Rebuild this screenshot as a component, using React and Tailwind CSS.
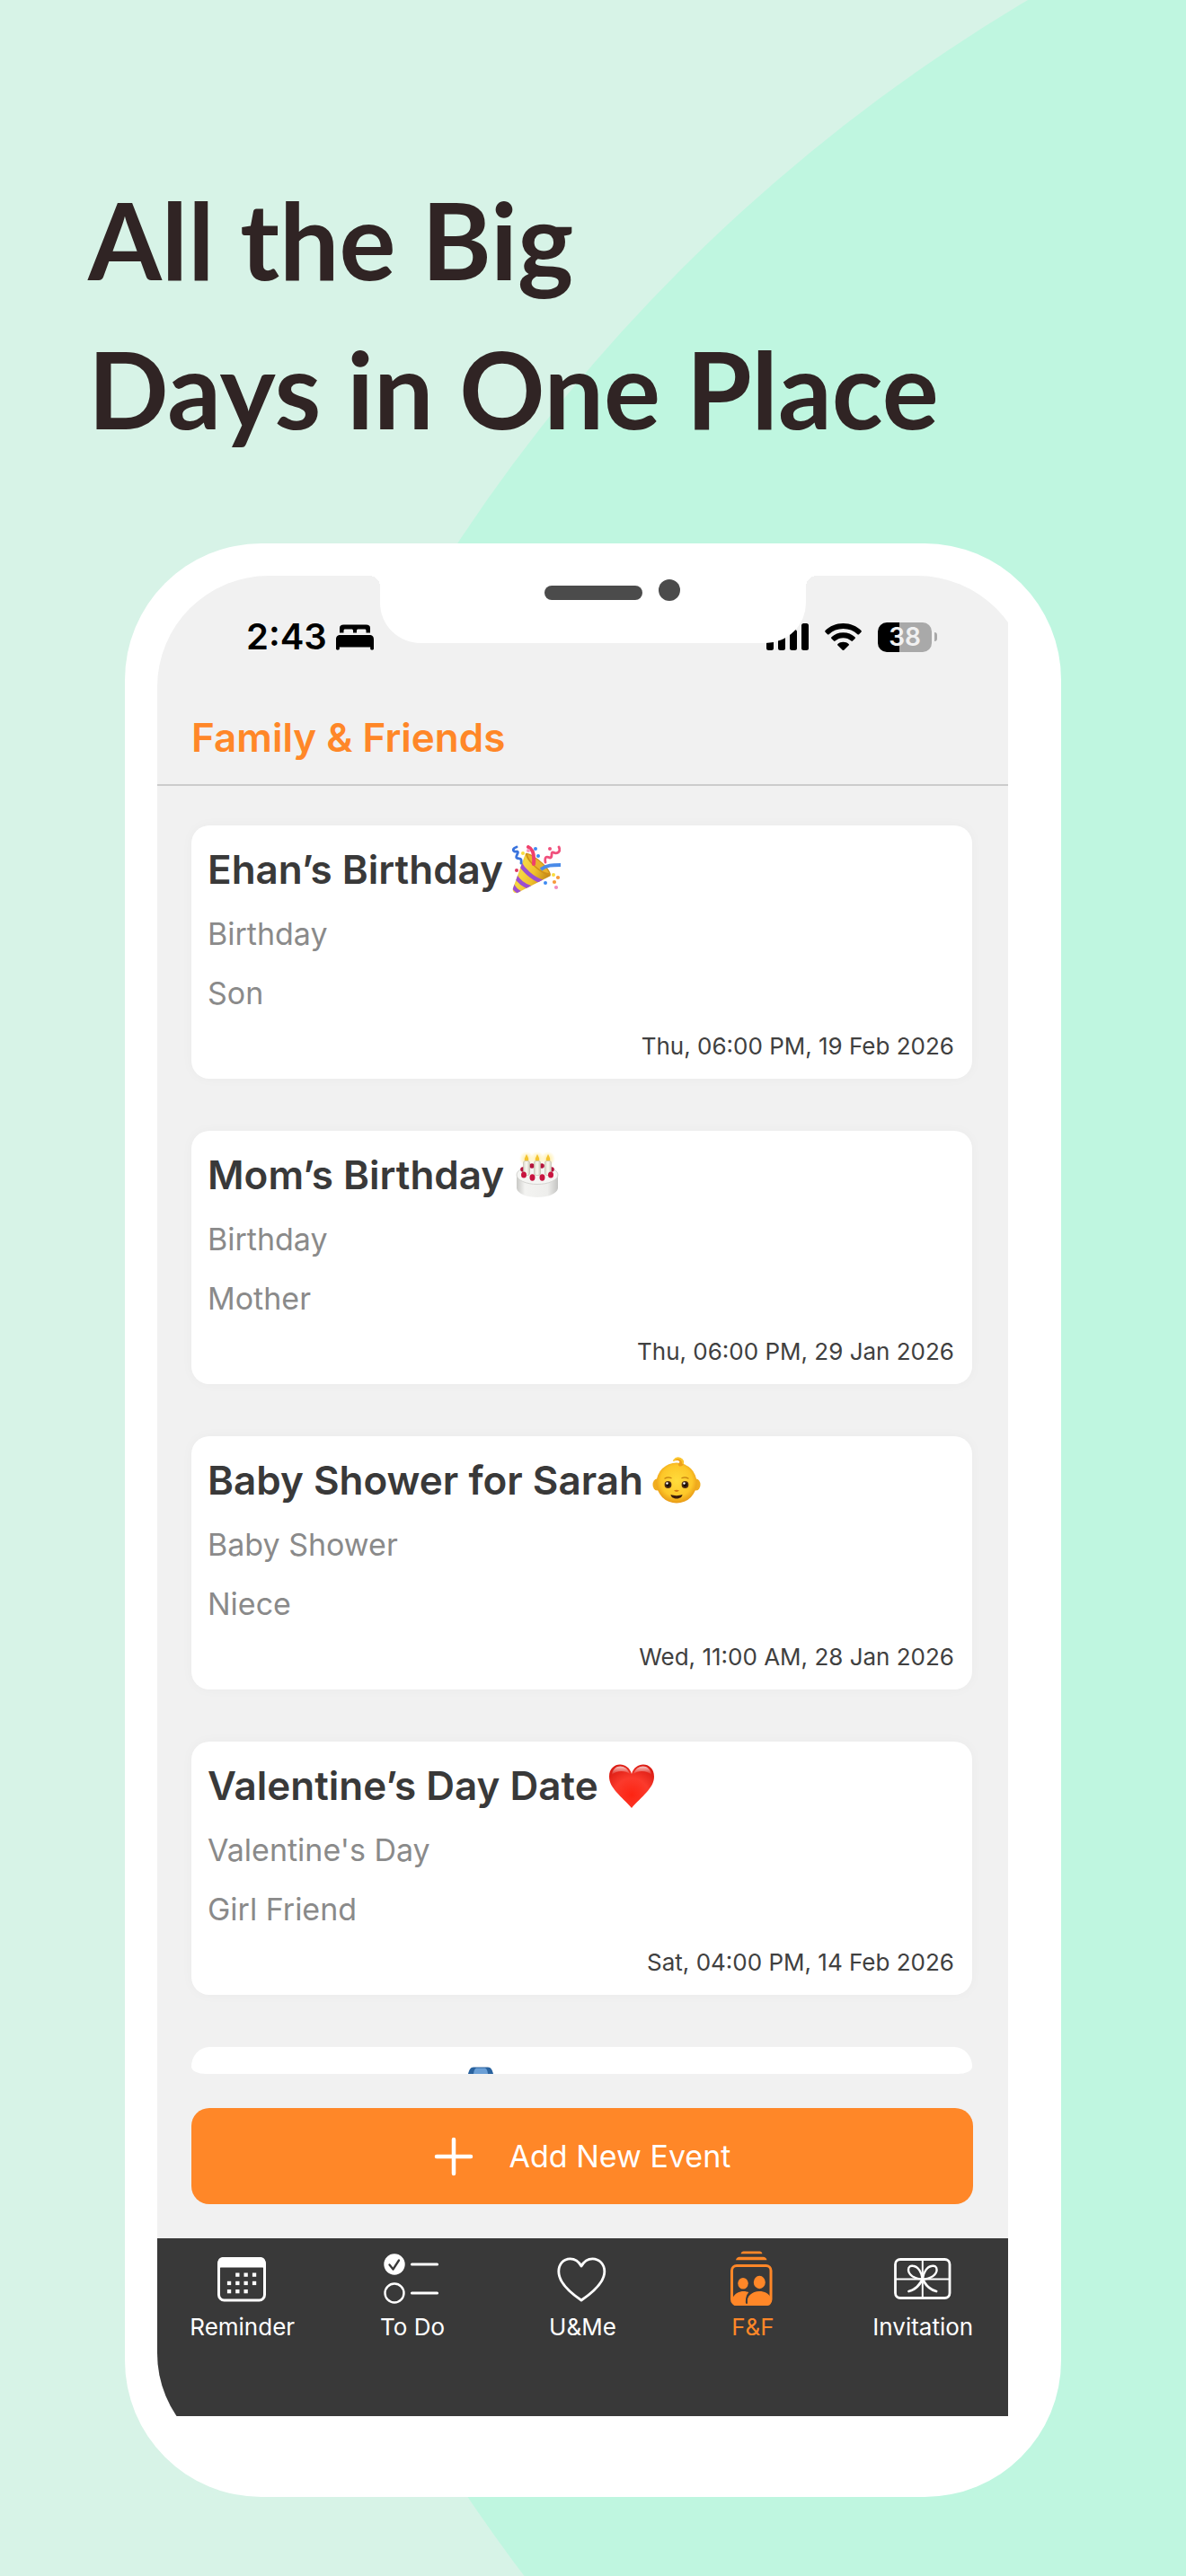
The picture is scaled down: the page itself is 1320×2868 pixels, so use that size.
import React from "react";

function PartyEmoji() {
  return (
    <svg viewBox="0 0 54 54" className="size-[54px]" role="img" aria-label="Party popper">
      <defs>
        <linearGradient id="cone" x1="0" y1="0" x2="1" y2="0.4">
          <stop offset="0" stopColor="#b9861a" />
          <stop offset="0.35" stopColor="#f6d743" />
          <stop offset="0.65" stopColor="#f0c12c" />
          <stop offset="1" stopColor="#c58a17" />
        </linearGradient>
        <clipPath id="coneClip">
          <path d="M15 9 C20 12 38 26 43 34 L6 53 C2 54 0 51 1 48 Z" />
        </clipPath>
      </defs>
      <path d="M15 9 C20 12 38 26 43 34 L6 53 C2 54 0 51 1 48 Z" fill="url(#cone)" />
      <g clipPath="url(#coneClip)" fill="none" stroke="#9a4fd0" strokeWidth="4.5">
        <path d="M8 19 C12 27 22 37 34 41" />
        <path d="M3 33 C6 39 13 45 22 48" />
        <path d="M0 44 C2 48 5 51 9 53" />
      </g>
      <path d="M15 9 C20 7 42 24 43 33 C40 37 15 20 15 9 Z" fill="#cf8f18" />
      <path d="M17 10 C24 12 38 23 41 31 C34 31 19 20 17 10 Z" fill="#e9b32c" />
      <path d="M18 2 C23 4 25 10 24 21" fill="none" stroke="#f0406c" strokeWidth="4" strokeLinecap="round" />
      <path d="M32 27 C38 22 45 22 54 22" fill="none" stroke="#4a8be8" strokeWidth="4" />
      <path d="M5 2 C-1 4 1 8 5 7 C9 7 3 13 5 14 C8 16 11 13 10 20" fill="none" stroke="#3973dd" strokeWidth="2.8" strokeLinecap="round" />
      <path d="M52 2 C55 8 49 10 46 8 C42 7 46 14 42 14 C38 12 36 13 37 19" fill="none" stroke="#f0507c" strokeWidth="2.8" strokeLinecap="round" />
      <circle cx="26" cy="4" r="2" fill="#3d8af2" />
      <circle cx="29" cy="12" r="2" fill="#3d8af2" />
      <circle cx="18" cy="6" r="2" fill="#f59ac0" />
      <circle cx="42" cy="4" r="2" fill="#f0507c" />
      <circle cx="12" cy="9" r="2" fill="#f9dc3f" />
      <circle cx="5" cy="28" r="2" fill="#e03a62" />
      <circle cx="46" cy="33" r="2" fill="#f9dc3f" />
      <circle cx="51" cy="36" r="2.1" fill="#f79a3a" />
      <circle cx="47" cy="41" r="2.1" fill="#f79a3a" />
      <circle cx="37" cy="42" r="2" fill="#3d8af2" />
      <circle cx="49" cy="47" r="2.1" fill="#f08ac0" />
    </svg>
  );
}

function CakeEmoji() {
  return (
    <svg viewBox="0 0 54 54" className="size-[54px]" role="img" aria-label="Birthday cake">
      <defs>
        <linearGradient id="cakeSide" x1="0" y1="0" x2="1" y2="0">
          <stop offset="0" stopColor="#c9c9c6" />
          <stop offset="0.2" stopColor="#f3f3f1" />
          <stop offset="0.75" stopColor="#eeeeec" />
          <stop offset="1" stopColor="#c4c4c2" />
        </linearGradient>
        <linearGradient id="candle" x1="0" y1="0" x2="1" y2="0">
          <stop offset="0" stopColor="#d9d6c8" />
          <stop offset="0.5" stopColor="#fbfaf3" />
          <stop offset="1" stopColor="#cfccbd" />
        </linearGradient>
        <radialGradient id="glow">
          <stop offset="0" stopColor="#ffe680" stopOpacity="0.8" />
          <stop offset="1" stopColor="#ffe680" stopOpacity="0" />
        </radialGradient>
      </defs>
      <path d="M4 27 V42 C5 48 15 52 27 52 S49 48 50 42 V27 Z" fill="url(#cakeSide)" />
      <ellipse cx="27" cy="27" rx="23" ry="10.5" fill="#f5f5f3" stroke="#d4d4d1" />
      <g fill="#b5123c">
        <circle cx="21" cy="17" r="2.8" />
        <circle cx="32" cy="17" r="2.8" />
        <circle cx="11" cy="21" r="2.8" />
        <circle cx="43" cy="21" r="2.8" />
      </g>
      {[15, 27, 39].map((x) => (
        <g key={x}>
          <circle cx={x} cy="9" r="8" fill="url(#glow)" />
          <path d={`M${x} 4 c1.5 3 2.5 4.500 2.200 6.500 c-.5 2.300 -4 2.300 -4.400 0 c-.3 -2 1 -3.500 2.200 -6.500z`} fill="#f3c330" />
          <rect x={x - 3.5} y="11.500" width="7" height="16" rx="2" fill="url(#candle)" stroke="#bdb9a8" strokeWidth="0.6" />
        </g>
      ))}
      <g fill="#c8143f">
        <ellipse cx="12" cy="27" rx="3" ry="3.5" />
        <ellipse cx="21.500" cy="30" rx="3" ry="3.700" />
        <ellipse cx="32.500" cy="30" rx="3" ry="3.700" />
        <ellipse cx="42" cy="27" rx="3" ry="3.500" />
      </g>
    </svg>
  );
}

function BabyEmoji() {
  return (
    <svg viewBox="0 0 54 54" className="size-[54px]" role="img" aria-label="Baby">
      <defs>
        <radialGradient id="skin" cx="0.5" cy="0.45" r="0.55">
          <stop offset="0" stopColor="#ffdc3c" />
          <stop offset="0.7" stopColor="#fdc729" />
          <stop offset="1" stopColor="#e99a16" />
        </radialGradient>
      </defs>
      <ellipse cx="5" cy="32" rx="4.500" ry="6.500" fill="#f0ac1e" />
      <ellipse cx="49" cy="32" rx="4.500" ry="6.500" fill="#f0ac1e" />
      <circle cx="27" cy="30" r="22.500" fill="url(#skin)" />
      <path d="M24 5 C28 -1 36 3 35 8 C34 13 28 12 29 9 C30 7 31 7 30 6 C28 4 27 6 24 5 Z" fill="#eda01b" />
      <path d="M24 5 C28 0 34 3 34 8" fill="none" stroke="#fbc52d" strokeWidth="2" strokeLinecap="round" />
      <path d="M14 25 q3.500 -2 7 -.5 M33 24.500 q3.500 -1.500 7 .5" fill="none" stroke="#c27c10" strokeWidth="1.300" strokeLinecap="round" />
      <circle cx="17.500" cy="32" r="3.900" fill="#4b2b12" />
      <circle cx="36.500" cy="32" r="3.900" fill="#4b2b12" />
      <circle cx="17.500" cy="32" r="2.200" fill="#160c05" />
      <circle cx="36.500" cy="32" r="2.200" fill="#160c05" />
      <circle cx="16.500" cy="30.500" r="1.200" fill="#fff" />
      <circle cx="35.500" cy="30.500" r="1.200" fill="#fff" />
      <path d="M24 38.500 q3 2.800 6 0 q-3 -1.500 -6 0z" fill="#d27a11" />
      <path d="M20.500 43 C24 44.500 30 44.500 33.500 43 C33 49 21 49 20.500 43 Z" fill="#3a1c0b" />
    </svg>
  );
}

function HeartEmoji() {
  return (
    <svg viewBox="0 0 54 54" className="size-[54px]" role="img" aria-label="Red heart">
      <defs>
        <radialGradient id="heartFill" cx="0.5" cy="0.7" r="0.7">
          <stop offset="0" stopColor="#fd2412" />
          <stop offset="0.55" stopColor="#fb3a2c" />
          <stop offset="1" stopColor="#dc1d14" />
        </radialGradient>
        <linearGradient id="heartShine" x1="0" y1="0" x2="0" y2="1">
          <stop offset="0" stopColor="#fff" stopOpacity="0.75" />
          <stop offset="1" stopColor="#fff" stopOpacity="0" />
        </linearGradient>
      </defs>
      <path d="M27 14 C23 -1 2 0 2 17 C2 30 16 39 27 52 C38 39 52 30 52 17 C52 0 31 -1 27 14 Z" fill="url(#heartFill)" />
      <path d="M5 15 C6 3 21 2 25 14 C20 10 10 10 5 15 Z" fill="url(#heartShine)" />
      <path d="M49 15 C48 3 33 2 29 14 C34 10 44 10 49 15 Z" fill="url(#heartShine)" />
    </svg>
  );
}

function BedIcon() {
  return (
    <svg viewBox="0 0 42 29" className="h-[29px] w-[42px]" role="img" aria-label="Sleep focus">
      <path d="M4 9.500 V4.500 C4 1.500 5.500 0.500 8.500 0.500 H33.500 C36.500 0.500 38 1.500 38 4.500 V9.500 H33.500 V7.500 C33.500 6 33 5.500 31.500 5.500 H25 C23.500 5.500 23 6 23 7.500 V9.500 H19 V7.500 C19 6 18.500 5.500 17 5.500 H10.500 C9 5.500 8.500 6 8.500 7.500 V9.500 Z" />
      <path d="M0 17 C0 13.500 1.500 12 5 12 H37 C40.500 12 42 13.500 42 17 V27.500 C42 29 38.200 29 38.200 27.500 V25.500 H3.800 V27.500 C3.800 29 0 29 0 27.500 Z" />
    </svg>
  );
}

function SignalIcon() {
  return (
    <svg viewBox="0 0 47 30" className="h-[30px] w-[47px]" role="img" aria-label="Signal strength">
      <rect x="0" y="19" width="8" height="11" rx="2.500" />
      <rect x="13" y="13" width="8" height="17" rx="2.500" />
      <rect x="26" y="7" width="8" height="23" rx="2.500" />
      <rect x="39" y="0" width="8" height="30" rx="2.500" />
    </svg>
  );
}

function WifiIcon() {
  return (
    <svg viewBox="0 0 41 30" className="h-[30px] w-[41px]" role="img" aria-label="Wi-Fi">
      <path d="M20.500 0 C28.500 0 35.500 3 40.500 8 C41 8.600 41 9.200 40.500 9.700 L38 12.200 C37.500 12.700 36.900 12.600 36.400 12.200 C32.200 8.200 26.700 6 20.500 6 S8.800 8.200 4.600 12.200 C4.100 12.600 3.500 12.700 3 12.200 L0.500 9.700 C0 9.200 0 8.600 0.500 8 C5.500 3 12.500 0 20.500 0 Z" />
      <path d="M20.500 10.300 C25.600 10.300 30.200 12.200 33.600 15.300 C34.100 15.900 34.100 16.500 33.600 17 L31 19.500 C30.500 20 29.900 20 29.400 19.600 C27 17.500 23.900 16.300 20.500 16.300 S14 17.500 11.600 19.600 C11.100 20 10.500 20 10 19.500 L7.400 17 C6.900 16.500 6.900 15.900 7.400 15.300 C10.800 12.200 15.400 10.300 20.500 10.300 Z" />
      <path d="M20.500 20.800 C22.900 20.800 25 21.600 26.600 23 C27.100 23.500 27.100 24.100 26.600 24.600 L21.300 29.700 C20.800 30.100 20.200 30.100 19.700 29.700 L14.400 24.600 C13.900 24.100 13.900 23.500 14.400 23 C16 21.600 18.100 20.800 20.500 20.800 Z" />
    </svg>
  );
}

function Battery() {
  return (
    <div className="flex items-center gap-[3px]">
      <div className="flex h-[33px] w-[60px] items-center justify-center rounded-[10px] bg-[linear-gradient(to_right,#000_40%,#a9a9a9_40%)] text-[28px] leading-[33px] font-semibold text-[#f1f1f1]">
        38
      </div>
      <div className="h-[10px] w-[3px] rounded-r-full bg-[#a9a9a9]" />
    </div>
  );
}

function ReminderIcon() {
  return (
    <svg viewBox="0 0 64 64" className="size-16" fill="none" aria-hidden="true">
      <rect x="5.500" y="9.500" width="51" height="46.500" rx="6" stroke="currentColor" strokeWidth="3" />
      <path d="M4.500 22 V14 C4.500 10 7 8 11 8 H51 C55 8 57.500 10 57.500 14 V22 C56.500 20 55 19.500 52.500 19.500 H9.500 C7 19.500 5.500 20 4.500 22 Z" fill="currentColor" />
      <g fill="currentColor">
        <rect x="24.200" y="25.500" width="4.300" height="4.300" />
        <rect x="33.500" y="25.500" width="4.300" height="4.300" />
        <rect x="42.900" y="25.500" width="4.300" height="4.300" />
        <rect x="14.900" y="34.800" width="4.300" height="4.300" />
        <rect x="24.200" y="34.800" width="4.300" height="4.300" />
        <rect x="33.500" y="34.800" width="4.300" height="4.300" />
        <rect x="42.900" y="34.800" width="4.300" height="4.300" />
        <rect x="14.900" y="44" width="4.300" height="4.300" />
        <rect x="24.200" y="44" width="4.300" height="4.300" />
        <rect x="33.500" y="44" width="4.300" height="4.300" />
      </g>
    </svg>
  );
}

function TodoIcon() {
  return (
    <svg viewBox="0 0 64 64" className="size-16" fill="none" strokeLinecap="round" strokeLinejoin="round" aria-hidden="true">
      <circle cx="12" cy="16" r="11.700" fill="currentColor" />
      <path d="M6.500 16.500 L10.500 21.500 L17 11.500" stroke="#393939" strokeWidth="2.300" />
      <circle cx="12" cy="48" r="10.500" stroke="currentColor" strokeWidth="2.400" />
      <path d="M31.500 16 H59.500 M31.500 48 H59.500" stroke="currentColor" strokeWidth="3.200" />
    </svg>
  );
}

function HeartIcon() {
  return (
    <svg viewBox="0 0 64 64" className="size-16" fill="none" aria-hidden="true">
      <path d="M31 18 C28 12.500 24 9.800 18.500 9.800 C11 9.800 5.800 16 5.800 24 C5.800 36 17 46.500 31 56 C45 46.500 56.800 36 56.800 24 C56.800 16 51 9.800 43.500 9.800 C38 9.800 34 12.500 31 18 Z" stroke="currentColor" strokeWidth="2.800" strokeLinejoin="round" />
    </svg>
  );
}

function FriendsIcon() {
  return (
    <svg viewBox="0 0 64 64" className="size-16" fill="currentColor" aria-hidden="true">
      <path d="M18.600 4.300 C19 2.500 20 1.500 21.500 1.500 H39.500 C41 1.500 42 2.500 42.400 4.300 Z" />
      <path d="M13 11.300 C13.500 9 15 7.800 17 7.800 H43.500 C45.500 7.800 47 9 47.500 11.300 Z" />
      <rect x="8.500" y="17.500" width="43.500" height="43" rx="5.500" fill="none" stroke="currentColor" strokeWidth="3" />
      <ellipse cx="21" cy="37.300" rx="5.700" ry="6.300" />
      <ellipse cx="39.300" cy="36" rx="6.500" ry="7.200" />
      <path d="M9 54 C12 48 17 46 21.500 46 C24 46 26 46.500 28 47.500 C25.500 50.500 23.500 54.500 24 60 H33 V62 H13 C10 62 9 60 9 58 Z" />
      <path d="M25.500 59 C25 51.500 31 46 39 46 C45 46 49.500 48.500 52 53 V58 C52 61 50 62 47 62 H24 V59 Z" />
      <path d="M28 47.500 C25.500 50.500 24.500 54.500 25 59" fill="none" stroke="#393939" strokeWidth="1.900" strokeLinecap="round" />
    </svg>
  );
}

function GiftIcon() {
  return (
    <svg viewBox="0 0 64 64" className="size-16" fill="none" stroke="currentColor" strokeLinecap="round" aria-hidden="true">
      <rect x="1.500" y="10.500" width="60.500" height="43" rx="5.500" strokeWidth="2.800" />
      <path d="M31.800 11 V53 M2 32.500 H61.500" strokeWidth="2" />
      <path d="M31.800 32.500 C22 32.500 16 27 16 22 C16 18 19 17.500 21 17.800 C27 18.500 31 25 31.800 32.500 C32.600 25 36.600 18.500 42.600 17.800 C44.600 17.500 47.600 18 47.600 22 C47.600 27 41.600 32.500 31.800 32.500 Z" strokeWidth="2.400" />
      <path d="M31.800 32.500 C28 40 23 44.500 16.500 46 M31.800 32.500 C35.600 40 40.600 44.500 47.100 46" strokeWidth="2.800" />
    </svg>
  );
}

const events = [
  { title: "Ehan’s Birthday", kind: "Birthday", relation: "Son", date: "Thu, 06:00 PM, 19 Feb 2026", Emoji: PartyEmoji },
  { title: "Mom’s Birthday", kind: "Birthday", relation: "Mother", date: "Thu, 06:00 PM, 29 Jan 2026", Emoji: CakeEmoji },
  { title: "Baby Shower for Sarah", kind: "Baby Shower", relation: "Niece", date: "Wed, 11:00 AM, 28 Jan 2026", Emoji: BabyEmoji },
  { title: "Valentine’s Day Date", kind: "Valentine's Day", relation: "Girl Friend", date: "Sat, 04:00 PM, 14 Feb 2026", Emoji: HeartEmoji },
];

const tabs = [
  { label: "Reminder", Icon: ReminderIcon },
  { label: "To Do", Icon: TodoIcon },
  { label: "U&Me", Icon: HeartIcon },
  { label: "F&F", Icon: FriendsIcon, active: true },
  { label: "Invitation", Icon: GiftIcon },
];

function EventCard({ title, kind, relation, date, Emoji }) {
  return (
    <li className="rounded-[20px] bg-white pt-[21px] pr-5 pb-4 pl-[18px] shadow-[0_0_14px_rgba(0,0,0,0.03)]">
      <div className="flex items-center gap-[10px]">
        <h3 className="text-[44px] leading-[56px] font-semibold text-[#393939]">{title}</h3>
        <Emoji />
      </div>
      <div className="mt-[11px] text-[34px] leading-[66px] text-[#8a8a8a]">
        <p>{kind}</p>
        <p>{relation}</p>
      </div>
      <p className="mt-[6px] text-right text-[26px] leading-10 text-[#404040]">{date}</p>
    </li>
  );
}

export default function App() {
  return (
    <div className="relative min-h-screen overflow-hidden bg-[#d7f3e7] pb-[88px] font-['Inter','Liberation_Sans',sans-serif]">
      <div className="absolute -top-[274px] left-[185px] size-[3916px] rounded-full bg-[#bff6e0]" />

      <h1 className="relative px-[98px] pt-[184px] font-['Lato','Liberation_Sans',sans-serif] text-[118px] leading-[166px] font-bold text-[#302424]">
        All the Big
        <br />
        Days in One Place
      </h1>

      <main className="relative mx-[139px] mt-[89px] rounded-[152px] bg-white p-9">
        <div className="overflow-hidden rounded-[124px] bg-white pr-[23px] pb-[54px]">
          <div className="bg-[#f1f1f1]">
            <div className="flex h-[136px] items-center justify-between pr-[79px] pl-[99px] text-black">
              <div className="flex items-center gap-[10px]">
                <span className="text-[40px] leading-[48px] font-semibold">2:43</span>
                <BedIcon />
              </div>
              <div className="flex items-center gap-[18px]">
                <SignalIcon />
                <WifiIcon />
                <Battery />
              </div>
            </div>

            <header className="border-b-2 border-[#cccccc] px-[38px] pt-[14px] pb-[22px]">
              <h2 className="text-[44px] leading-[60px] font-semibold text-[#ff8728]">Family &amp; Friends</h2>
            </header>

            <ul className="flex flex-col gap-[58px] pt-11 pr-10 pl-[38px]">
              {events.map((event) => (
                <EventCard key={event.title} {...event} />
              ))}
              <li className="flex h-[30px] items-end overflow-hidden rounded-[20px_20px_16px_16px/22px_22px_8px_8px] bg-white pl-[308px]">
                <svg viewBox="0 0 28 8" className="h-2 w-7" aria-hidden="true">
                  <path d="M0 8 C1 4 2.500 0.500 6 0.500 H22 C25.500 0.500 27 4 28 8 Z" fill="#2a639f" />
                  <path d="M6 8 C6.500 4 7.500 2 9 1.500 H19 C20.500 2 21.500 4 22 8 Z" fill="#6a9fd6" />
                </svg>
              </li>
            </ul>

            <div className="py-[38px] pr-[39px] pl-[38px]">
              <button type="button" className="flex h-[107px] w-full items-center justify-center gap-10 rounded-[20px] bg-[#ff8728] text-[34px] text-white">
                <svg viewBox="0 0 44 44" className="size-11" fill="none" stroke="currentColor" strokeWidth="4.500" strokeLinecap="round" aria-hidden="true">
                  <path d="M22 3 V41 M3 22 H41" />
                </svg>
                Add New Event
              </button>
            </div>

            <nav className="grid grid-cols-5 bg-[#393939] pt-[13px] pb-[81px]">
              {tabs.map(({ label, Icon, active }) => (
                <button
                  key={label}
                  type="button"
                  aria-current={active ? "page" : undefined}
                  className={
                    active
                      ? "flex flex-col items-center gap-1 text-[26px] leading-9 text-[#ff8728]"
                      : "flex flex-col items-center gap-1 text-[26px] leading-9 text-white"
                  }
                >
                  <Icon />
                  {label}
                </button>
              ))}
            </nav>
          </div>
        </div>

        <div className="absolute top-9 left-1/2 flex h-[75px] w-[474px] -translate-x-1/2 items-start gap-[18px] rounded-b-[45px] bg-white pt-1 pl-[183px] before:absolute before:top-0 before:right-full before:size-3 before:bg-[radial-gradient(circle_at_0_100%,transparent_12px,white_12px)] after:absolute after:top-0 after:left-full after:size-3 after:bg-[radial-gradient(circle_at_100%_100%,transparent_12px,white_12px)]">
          <div className="mt-[7px] h-4 w-[109px] rounded-full bg-[#4b4b4b]" />
          <div className="size-6 rounded-full bg-[#4b4b4b]" />
        </div>
      </main>
    </div>
  );
}
